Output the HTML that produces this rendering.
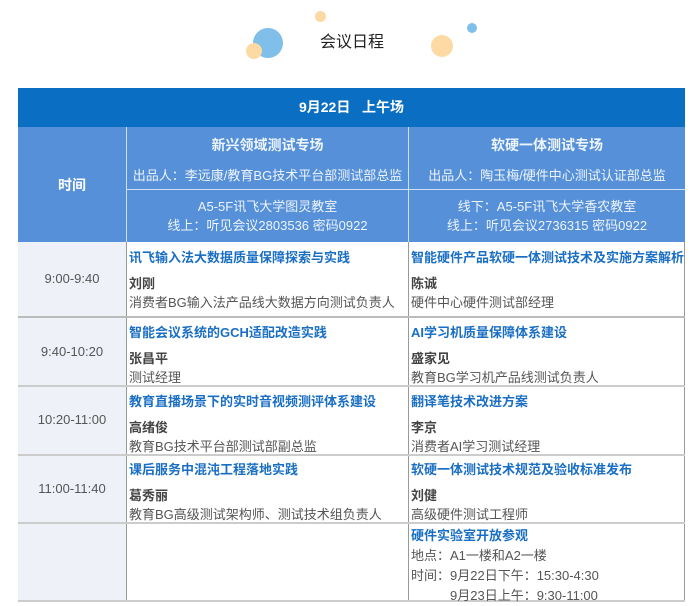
<!DOCTYPE html>
<html><head><meta charset="utf-8"><style>
*{margin:0;padding:0;box-sizing:border-box}
body{width:694px;height:603px;background:#fff;position:relative;overflow:hidden;font-family:"Liberation Sans","Noto Sans CJK SC",sans-serif;font-size:13px;color:#555}
.a{position:absolute}
.c{position:absolute;border-radius:50%}
.t{color:#1a6fc4;font-weight:bold}
.n{color:#444;font-weight:bold}
.center{text-align:center}
.wh{color:#eef4fc}
</style></head><body>
<div class="c" style="left:253px;top:28px;width:30px;height:30px;background:#7fbfea"></div>
<div class="c" style="left:246px;top:43px;width:16px;height:16px;background:#fdd9a3"></div>
<div class="c" style="left:315px;top:11px;width:11px;height:11px;background:#fdd9a3"></div>
<div class="c" style="left:431px;top:35px;width:22px;height:22px;background:#fdd9a3"></div>
<div class="c" style="left:467px;top:23px;width:10px;height:10px;background:#7fbfea"></div>
<div class="a" style="left:320px;top:28px;font-size:16px;color:#222">会议日程</div>

<div class="a" style="left:18px;top:88px;width:667px;height:39px;background:#0a6fc2;color:#fff;font-weight:bold;font-size:14px;text-align:center;line-height:39px">9月22日&nbsp;&nbsp;&nbsp;上午场</div>
<div class="a" style="left:18px;top:127px;width:667px;height:115px;background:#5590d8"></div>
<div class="a" style="left:126px;top:127px;width:1px;height:115px;background:#cfe0f5"></div>
<div class="a" style="left:408px;top:127px;width:1px;height:115px;background:#cfe0f5"></div>
<div class="a" style="left:127px;top:189px;width:558px;height:1px;background:#cfe0f5"></div>
<div class="a wh" style="left:18px;top:175px;width:108px;text-align:center;font-weight:bold;font-size:14px;color:#fff">时间</div>
<div class="a wh center" style="left:127px;top:135px;width:281px;font-weight:bold;font-size:14px">新兴领域测试专场</div>
<div class="a wh center" style="left:127px;top:165px;width:281px">出品人：李远康/教育BG技术平台部测试部总监</div>
<div class="a wh center" style="left:127px;top:197px;width:281px;line-height:19px">A5-5F讯飞大学图灵教室<br>线上：听见会议2803536 密码0922</div>
<div class="a wh center" style="left:409px;top:135px;width:276px;font-weight:bold;font-size:14px">软硬一体测试专场</div>
<div class="a wh center" style="left:409px;top:165px;width:276px">出品人：陶玉梅/硬件中心测试认证部总监</div>
<div class="a wh center" style="left:409px;top:197px;width:276px;line-height:19px">线下：A5-5F讯飞大学香农教室<br>线上：听见会议2736315 密码0922</div>

<div class="a" style="left:18px;top:242px;width:108px;height:360px;background:#eef2f8"></div>
<div class="a" style="left:126px;top:242px;width:1px;height:360px;background:#999"></div>
<div class="a" style="left:408px;top:242px;width:1px;height:360px;background:#999"></div>
<div class="a" style="left:684px;top:242px;width:1px;height:360px;background:#999"></div>
<div class="a" style="left:18px;top:316px;width:667px;height:2px;background:#bbb"></div>
<div class="a" style="left:18px;top:385px;width:667px;height:2px;background:#ccc"></div>
<div class="a" style="left:18px;top:454px;width:667px;height:2px;background:#ccc"></div>
<div class="a" style="left:18px;top:522px;width:667px;height:2px;background:#ccc"></div>
<div class="a" style="left:18px;top:600px;width:667px;height:2px;background:#ccc"></div>

<div class="a center" style="left:18px;top:271px;width:108px">9:00-9:40</div>
<div class="a center" style="left:18px;top:344px;width:108px">9:40-10:20</div>
<div class="a center" style="left:18px;top:412px;width:108px">10:20-11:00</div>
<div class="a center" style="left:18px;top:481px;width:108px">11:00-11:40</div>

<div class="a" style="left:129px;top:248px;line-height:19px"><div class="t">讯飞输入法大数据质量保障探索与实践</div><div class="n" style="margin-top:7px">刘刚</div><div>消费者BG输入法产品线大数据方向测试负责人</div></div>
<div class="a" style="left:411px;top:248px;line-height:19px"><div class="t">智能硬件产品软硬一体测试技术及实施方案解析</div><div class="n" style="margin-top:7px">陈诚</div><div>硬件中心硬件测试部经理</div></div>
<div class="a" style="left:129px;top:323px;line-height:19px"><div class="t">智能会议系统的GCH适配改造实践</div><div class="n" style="margin-top:7px">张昌平</div><div>测试经理</div></div>
<div class="a" style="left:411px;top:323px;line-height:19px"><div class="t">AI学习机质量保障体系建设</div><div class="n" style="margin-top:7px">盛家见</div><div>教育BG学习机产品线测试负责人</div></div>
<div class="a" style="left:129px;top:392px;line-height:19px"><div class="t">教育直播场景下的实时音视频测评体系建设</div><div class="n" style="margin-top:7px">高绪俊</div><div>教育BG技术平台部测试部副总监</div></div>
<div class="a" style="left:411px;top:392px;line-height:19px"><div class="t">翻译笔技术改进方案</div><div class="n" style="margin-top:7px">李京</div><div>消费者AI学习测试经理</div></div>
<div class="a" style="left:129px;top:460px;line-height:19px"><div class="t">课后服务中混沌工程落地实践</div><div class="n" style="margin-top:7px">葛秀丽</div><div>教育BG高级测试架构师、测试技术组负责人</div></div>
<div class="a" style="left:411px;top:460px;line-height:19px"><div class="t">软硬一体测试技术规范及验收标准发布</div><div class="n" style="margin-top:7px">刘健</div><div>高级硬件测试工程师</div></div>
<div class="a" style="left:411px;top:526px;line-height:20px"><div class="t">硬件实验室开放参观</div><div>地点：A1一楼和A2一楼</div><div>时间：9月22日下午：15:30-4:30</div><div style="padding-left:39px">9月23日上午：9:30-11:00</div></div>
</body></html>
